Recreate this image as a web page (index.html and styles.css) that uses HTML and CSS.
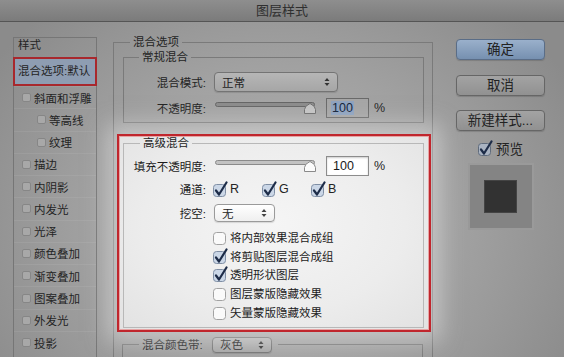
FILE: index.html
```html
<!DOCTYPE html>
<html lang="zh-CN">
<head>
    <meta charset="UTF-8">
    <title>图层样式</title>
    <link rel="stylesheet" href="styles.css">
</head>
<body>
    <div class="window">
        <div class="titlebar">图层样式</div>

        <div class="content">
            <!-- style list -->
            <div class="sidebar">
                <div class="side-head">样式</div>
                <div class="side-sel">混合选项:默认</div>
                <div class="side-item"><span class="mini"></span>斜面和浮雕</div>
                <div class="side-item sub"><span class="mini"></span>等高线</div>
                <div class="side-item sub"><span class="mini"></span>纹理</div>
                <div class="side-item"><span class="mini"></span>描边</div>
                <div class="side-item"><span class="mini"></span>内阴影</div>
                <div class="side-item"><span class="mini"></span>内发光</div>
                <div class="side-item"><span class="mini"></span>光泽</div>
                <div class="side-item"><span class="mini"></span>颜色叠加</div>
                <div class="side-item"><span class="mini"></span>渐变叠加</div>
                <div class="side-item"><span class="mini"></span>图案叠加</div>
                <div class="side-item"><span class="mini"></span>外发光</div>
                <div class="side-item"><span class="mini"></span>投影</div>
            </div>

            <!-- blending options -->
            <div class="main">
                <fieldset class="group outer">
                    <legend>混合选项</legend>

                    <fieldset class="group normal">
                        <legend>常规混合</legend>
                        <div class="row first">
                            <span class="label">混合模式:</span>
                            <div class="select wide">正常
                                <svg class="arrows" width="6" height="10" viewBox="0 0 6 10"><path d="M0.5 4 L3 1 L5.5 4 Z M0.5 6 L3 9 L5.5 6 Z" fill="#333"/></svg>
                            </div>
                        </div>
                        <div class="row second">
                            <span class="label">不透明度:</span>
                            <svg class="slider" width="104" height="14" viewBox="0 0 104 14"><rect x="1.5" y="1.5" width="99" height="4" rx="2" fill="#8c8c8c" stroke="#666"/><path d="M90.5 12.5 V8.5 Q90.5 5 96 2.5 Q101.5 5 101.5 8.5 V12.5 Z" fill="#c4c4c4" stroke="#6e6e6e"/></svg>
                            <div class="num"><span class="sel">100</span></div>
                            <span class="pct">%</span>
                        </div>
                    </fieldset>

                    <div class="highlight">
                        <fieldset class="group advanced">
                            <legend>高级混合</legend>
                            <div class="row fill">
                                <span class="label">填充不透明度:</span>
                                <svg class="slider" width="104" height="14" viewBox="0 0 104 14"><rect x="1.5" y="1.5" width="99" height="4" rx="2" fill="#c2c2c2" stroke="#8a8a8a"/><path d="M90.5 12.5 V8.5 Q90.5 5 96 2.5 Q101.5 5 101.5 8.5 V12.5 Z" fill="#fbfbfb" stroke="#8a8a8a"/></svg>
                                <div class="num light">100</div>
                                <span class="pct">%</span>
                            </div>
                            <div class="row channels">
                                <span class="label">通道:</span>
                                <span class="chan">
                                    <svg class="cb" width="15" height="16" viewBox="0 0 15 16"><rect x="0.5" y="3.5" width="12" height="12" rx="3" fill="#cbd7e7" stroke="#7f8ea4"/><path d="M3 9.5 L6 13.5 L13.5 1.5" fill="none" stroke="#1d2c48" stroke-width="2.2" stroke-linecap="round" stroke-linejoin="round"/></svg>R
                                </span>
                                <span class="chan">
                                    <svg class="cb" width="15" height="16" viewBox="0 0 15 16"><rect x="0.5" y="3.5" width="12" height="12" rx="3" fill="#cbd7e7" stroke="#7f8ea4"/><path d="M3 9.5 L6 13.5 L13.5 1.5" fill="none" stroke="#1d2c48" stroke-width="2.2" stroke-linecap="round" stroke-linejoin="round"/></svg>G
                                </span>
                                <span class="chan">
                                    <svg class="cb" width="15" height="16" viewBox="0 0 15 16"><rect x="0.5" y="3.5" width="12" height="12" rx="3" fill="#cbd7e7" stroke="#7f8ea4"/><path d="M3 9.5 L6 13.5 L13.5 1.5" fill="none" stroke="#1d2c48" stroke-width="2.2" stroke-linecap="round" stroke-linejoin="round"/></svg>B
                                </span>
                            </div>
                            <div class="row knockout">
                                <span class="label">挖空:</span>
                                <div class="select light small">无
                                    <svg class="arrows" width="6" height="10" viewBox="0 0 6 10"><path d="M0.5 4 L3 1 L5.5 4 Z M0.5 6 L3 9 L5.5 6 Z" fill="#444"/></svg>
                                </div>
                            </div>
                            <div class="checks">
                                <div class="check-row">
                                    <svg class="cb" width="15" height="16" viewBox="0 0 15 16"><rect x="0.5" y="3.5" width="12" height="12" rx="3" fill="#fafafa" stroke="#a2a2a2"/></svg>将内部效果混合成组
                                </div>
                                <div class="check-row">
                                    <svg class="cb" width="15" height="16" viewBox="0 0 15 16"><rect x="0.5" y="3.5" width="12" height="12" rx="3" fill="#cbd7e7" stroke="#7f8ea4"/><path d="M3 9.5 L6 13.5 L13.5 1.5" fill="none" stroke="#1d2c48" stroke-width="2.2" stroke-linecap="round" stroke-linejoin="round"/></svg>将剪贴图层混合成组
                                </div>
                                <div class="check-row">
                                    <svg class="cb" width="15" height="16" viewBox="0 0 15 16"><rect x="0.5" y="3.5" width="12" height="12" rx="3" fill="#cbd7e7" stroke="#7f8ea4"/><path d="M3 9.5 L6 13.5 L13.5 1.5" fill="none" stroke="#1d2c48" stroke-width="2.2" stroke-linecap="round" stroke-linejoin="round"/></svg>透明形状图层
                                </div>
                                <div class="check-row">
                                    <svg class="cb" width="15" height="16" viewBox="0 0 15 16"><rect x="0.5" y="3.5" width="12" height="12" rx="3" fill="#fafafa" stroke="#a2a2a2"/></svg>图层蒙版隐藏效果
                                </div>
                                <div class="check-row">
                                    <svg class="cb" width="15" height="16" viewBox="0 0 15 16"><rect x="0.5" y="3.5" width="12" height="12" rx="3" fill="#fafafa" stroke="#a2a2a2"/></svg>矢量蒙版隐藏效果
                                </div>
                            </div>
                        </fieldset>
                    </div>

                    <fieldset class="group bands">
                        <legend>
                            <span class="band-label">混合颜色带:</span>
                            <span class="select small">灰色
                                <svg class="arrows" width="6" height="10" viewBox="0 0 6 10"><path d="M0.5 4 L3 1 L5.5 4 Z M0.5 6 L3 9 L5.5 6 Z" fill="#333"/></svg>
                            </span>
                        </legend>
                    </fieldset>
                </fieldset>
            </div>

            <!-- buttons and preview -->
            <div class="actions">
                <div class="btn primary">确定</div>
                <div class="btn">取消</div>
                <div class="btn">新建样式...</div>
                <div class="preview-row">
                    <svg class="cb" width="15" height="16" viewBox="0 0 15 16"><rect x="0.5" y="3.5" width="12" height="12" rx="3" fill="#a9b3c2" stroke="#5f6b7c"/><path d="M3 9.5 L6 13.5 L13.5 1.5" fill="none" stroke="#1d2c48" stroke-width="2.2" stroke-linecap="round" stroke-linejoin="round"/></svg>预览
                </div>
                <div class="preview">
                    <div class="swatch"></div>
                </div>
            </div>
        </div>
    </div>
</body>
</html>
```

FILE: styles.css
```css
* {
    box-sizing: border-box;
}

body {
    margin: 0;
    width: 564px;
    height: 357px;
    overflow: hidden;
    font-family: 'Liberation Sans', 'Noto Sans CJK SC', sans-serif;
    font-size: 11.5px;
    color: #242424;
    background-color: #8c8c8c;
}

.window {
    height: 357px;
    background: radial-gradient(ellipse 340px 290px at 275px 225px, #b4b4b4 0%, #a1a1a1 55%, #8b8b8b 100%);
}

.titlebar {
    height: 22px;
    line-height: 21px;
    text-align: center;
    font-size: 13px;
    color: #2f2f2f;
    background: linear-gradient(#8e8e8e, #7b7b7b);
    border-bottom: 1px solid #555;
}

.content {
    display: flex;
    height: 335px;
    overflow: hidden;
}

/* left list */
.sidebar {
    width: 84px;
    flex: none;
    margin: 15px 0 0 13px;
    border: 1px solid #767676;
    border-bottom: 0;
}

.side-head {
    height: 19px;
    line-height: 15px;
    padding-left: 4px;
}

.side-sel {
    height: 29px;
    margin: 0 -1px;
    border: 2px solid #a8282d;
    background-color: #8e9db2;
    line-height: 25px;
    padding-left: 3px;
}

.side-item {
    height: 22.27px;
    display: flex;
    align-items: center;
    gap: 3px;
    padding-left: 8px;
    border-top: 1px solid rgba(255, 255, 255, 0.07);
}

.side-item.sub {
    padding-left: 23px;
}

.mini {
    width: 9px;
    height: 9px;
    border-radius: 2px;
    background-color: #a8a8a8;
    border: 1px solid #868686;
}

/* group boxes */
.main {
    width: 320px;
    flex: none;
    margin-left: 16px;
}

.group {
    margin: 0;
    padding: 0;
    min-width: 0;
    border: 1px solid #7a7a7a;
}

.group > legend {
    padding: 0 3px;
    line-height: 14px;
    margin-left: 16px;
}

.outer {
    margin-top: 13px;
    height: 360px;
}

.normal {
    margin: 1px 8px 0 9px;
    padding-bottom: 4px;
}

.normal > legend {
    margin-left: 15px;
}

.row {
    display: flex;
    align-items: center;
    gap: 8px;
}

.label {
    width: 82px;
    flex: none;
    text-align: right;
}

.row.first {
    height: 20px;
    margin-top: 8px;
}

.row.second {
    height: 20px;
    margin-top: 6px;
}

.select {
    display: flex;
    align-items: center;
    justify-content: space-between;
    padding: 0 7px;
    border: 1px solid #747474;
    border-radius: 4px;
    background: linear-gradient(#b6b6b6, #a6a6a6);
    box-shadow: 0 1px 1px rgba(0, 0, 0, 0.12);
}

.select.wide {
    width: 124px;
    height: 20px;
}

.select.small {
    width: 61px;
    height: 18px;
}

.select.light {
    border-color: #9a9a9a;
    background: linear-gradient(#ffffff, #efefef);
}

.slider {
    flex: none;
}

.num {
    width: 43px;
    height: 20px;
    padding-left: 4px;
    border: 1px solid #6a6a6a;
    background-color: #a6a6a6;
    font-size: 12.5px;
    line-height: 18px;
    color: #1a1a1a;
}

.num .sel {
    background-color: #8fa3bf;
    color: #14233a;
    padding: 0 1px;
}

.num.light {
    border-color: #8c8c8c;
    background-color: #ffffff;
    box-shadow: inset 0 1px 2px rgba(0, 0, 0, 0.2);
    padding-left: 6px;
}

.pct {
    font-size: 12.5px;
    margin-left: -3px;
}

/* highlighted advanced area */
.highlight {
    position: relative;
    z-index: 1;
    margin: 11px 1px 0 3px;
    padding: 0 5px 2px 4px;
    border: 2px solid #c0262d;
    background: radial-gradient(ellipse at 50% 45%, #f5f5f5 0%, #ececec 60%, #e2e2e2 100%);
    box-shadow: inset 0 0 0 1px #e6a4a4, 0 0 20px 9px rgba(232, 232, 232, 0.5);
}

.advanced {
    border-color: #b8b8b8;
    padding-bottom: 6px;
}

.highlight .label,
.highlight .check-row {
    color: #1c1c1c;
}

.row.fill {
    height: 20px;
    margin-top: 6px;
}

.row.channels {
    height: 18px;
    margin-top: 4px;
    gap: 7px;
}

.chan {
    display: flex;
    align-items: center;
    gap: 2px;
    width: 42px;
    font-size: 12.5px;
}

.row.knockout {
    height: 18px;
    margin-top: 6px;
}

.cb {
    flex: none;
}

.checks {
    margin-top: 6px;
    padding-left: 89px;
}

.check-row {
    height: 18.6px;
    display: flex;
    align-items: center;
    gap: 2px;
}

.bands {
    margin: 4px 9px 0 8px;
    height: 40px;
}

.bands > legend {
    display: flex;
    align-items: center;
    gap: 9px;
    height: 18px;
    padding: 0 6px 0 3px;
}

.band-label {
    width: 61px;
}

.bands .select {
    height: 16px;
    width: 60px;
}

/* right column */
.actions {
    width: 89px;
    flex: none;
    margin-left: 23px;
    display: flex;
    flex-direction: column;
    align-items: center;
}

.btn {
    width: 89px;
    height: 21px;
    margin-top: 14.5px;
    border: 1px solid #666;
    border-radius: 4px;
    background: linear-gradient(#a3a3a3, #919191);
    box-shadow: 0 1px 1px rgba(0, 0, 0, 0.15);
    font-size: 13.5px;
    line-height: 19px;
    text-align: center;
    color: #222;
}

.btn.primary {
    margin-top: 17px;
    border-color: #5a6d87;
    background: linear-gradient(#9ab0cb, #7690b0);
}

.preview-row {
    display: flex;
    align-items: center;
    gap: 3px;
    height: 17px;
    margin-top: 8px;
    font-size: 13.5px;
}

.preview {
    width: 66px;
    height: 67px;
    margin-top: 7px;
    border: 2px solid #9a9a9a;
    background-color: #848484;
    display: flex;
    align-items: center;
    justify-content: center;
}

.swatch {
    width: 33px;
    height: 33px;
    background-color: #323232;
    border: 1px solid #444;
}
```
